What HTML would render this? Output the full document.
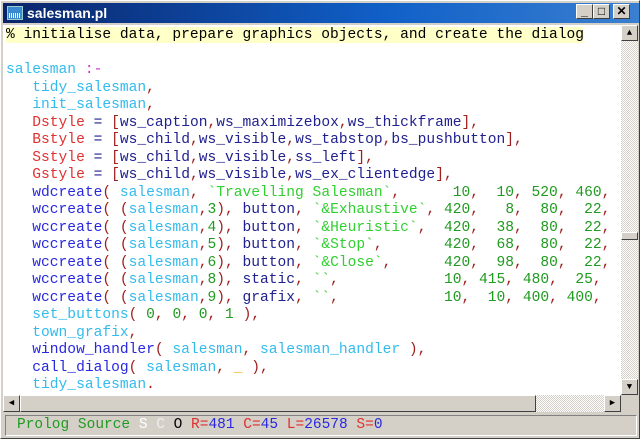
<!DOCTYPE html>
<html><head><style>
*{margin:0;padding:0;box-sizing:border-box}
body{width:640px;height:439px;background:#d4d0c8;position:relative;overflow:hidden;font-family:"Liberation Mono",monospace}
.win{position:absolute;left:0;top:0;width:640px;height:439px;border:1px solid #fff;border-right-color:#404040;border-bottom-color:#404040;background:#d4d0c8}
.title{position:absolute;left:2px;top:2px;width:636px;height:20px;background:linear-gradient(90deg,#0a246a,#1060c8 60%,#3a7fd0);color:#fff;font:bold 14px "Liberation Sans",sans-serif}
.title span{position:absolute;left:24px;top:2px}
.ic{position:absolute;left:4px;top:3px;width:16px;height:14px;background:#3a8ad0;border:1px solid #9cc}
.ic:after{content:"";position:absolute;left:1px;top:6px;width:12px;height:5px;background:repeating-linear-gradient(90deg,#fff 0 1px,#3a8ad0 1px 2px)}
.b{position:absolute;top:3px;width:17px;height:15px;background:#d4d0c8;border:1px solid #fff;border-right-color:#404040;border-bottom-color:#404040;color:#000;font:bold 12px "Liberation Sans",sans-serif;text-align:center;line-height:13px}
.ed{position:absolute;left:2px;top:24px;width:618px;height:370px;background:#fff;overflow:hidden}
pre{position:absolute;left:3px;top:2px;font:14.6px/17.5px "Liberation Mono",monospace;white-space:pre}
.cm{background:#ffffc8;color:#000}
.c{color:#33bbee}.p{color:#2828e0}.a{color:#202090}.r{color:#e03030}.d{color:#a02020}.n{color:#209a20}.s{color:#30d030}.m{color:#d030d0}.u{color:#f0b020}
.vs{position:absolute;left:620px;top:24px;width:17px;height:370px;background:repeating-conic-gradient(#fff 0 25%,#d4d0c8 0 50%) 0 0/2px 2px}
.hs{position:absolute;left:2px;top:394px;width:618px;height:17px;background:repeating-conic-gradient(#fff 0 25%,#d4d0c8 0 50%) 0 0/2px 2px}
.btn{position:absolute;background:#d4d0c8;border:1px solid #fff;border-right-color:#404040;border-bottom-color:#404040;font-size:9px;text-align:center;line-height:14px}
.st{position:absolute;left:4px;top:414px;width:632px;height:21px;border:1px solid #808080;border-right-color:#fff;border-bottom-color:#fff;font:14.5px/19px "Liberation Mono",monospace;padding-left:11px;white-space:pre}
</style></head><body>
<div class="win">
<div class="title"><div class="ic"></div><span>salesman.pl</span></div>
<div class="b" style="left:575px">_</div><div class="b" style="left:592px">□</div><div class="b" style="left:612px">✕</div>
<div class="ed"><pre><span class="cm">% initialise data, prepare graphics objects, and create the dialog</span>

<span class="c">salesman</span> <span class="m">:-</span>
   <span class="c">tidy_salesman</span><span class="d">,</span>
   <span class="c">init_salesman</span><span class="d">,</span>
   <span class="r">Dstyle</span> <span class="a">=</span> <span class="d">[</span><span class="a">ws_caption</span><span class="d">,</span><span class="a">ws_maximizebox</span><span class="d">,</span><span class="a">ws_thickframe</span><span class="d">],</span>
   <span class="r">Bstyle</span> <span class="a">=</span> <span class="d">[</span><span class="a">ws_child</span><span class="d">,</span><span class="a">ws_visible</span><span class="d">,</span><span class="a">ws_tabstop</span><span class="d">,</span><span class="a">bs_pushbutton</span><span class="d">],</span>
   <span class="r">Sstyle</span> <span class="a">=</span> <span class="d">[</span><span class="a">ws_child</span><span class="d">,</span><span class="a">ws_visible</span><span class="d">,</span><span class="a">ss_left</span><span class="d">],</span>
   <span class="r">Gstyle</span> <span class="a">=</span> <span class="d">[</span><span class="a">ws_child</span><span class="d">,</span><span class="a">ws_visible</span><span class="d">,</span><span class="a">ws_ex_clientedge</span><span class="d">],</span>
   <span class="p">wdcreate</span><span class="d">(</span> <span class="c">salesman</span><span class="d">,</span> <span class="s">`Travelling Salesman`</span><span class="d">,</span>      <span class="n">10</span><span class="d">,</span>  <span class="n">10</span><span class="d">,</span> <span class="n">520</span><span class="d">,</span> <span class="n">460</span><span class="d">,</span>
   <span class="p">wccreate</span><span class="d">(</span> <span class="d">(</span><span class="c">salesman</span><span class="d">,</span><span class="n">3</span><span class="d">),</span> <span class="a">button</span><span class="d">,</span> <span class="s">`&amp;Exhaustive`</span><span class="d">,</span> <span class="n">420</span><span class="d">,</span>   <span class="n">8</span><span class="d">,</span>  <span class="n">80</span><span class="d">,</span>  <span class="n">22</span><span class="d">,</span>
   <span class="p">wccreate</span><span class="d">(</span> <span class="d">(</span><span class="c">salesman</span><span class="d">,</span><span class="n">4</span><span class="d">),</span> <span class="a">button</span><span class="d">,</span> <span class="s">`&amp;Heuristic`</span><span class="d">,</span>  <span class="n">420</span><span class="d">,</span>  <span class="n">38</span><span class="d">,</span>  <span class="n">80</span><span class="d">,</span>  <span class="n">22</span><span class="d">,</span>
   <span class="p">wccreate</span><span class="d">(</span> <span class="d">(</span><span class="c">salesman</span><span class="d">,</span><span class="n">5</span><span class="d">),</span> <span class="a">button</span><span class="d">,</span> <span class="s">`&amp;Stop`</span><span class="d">,</span>       <span class="n">420</span><span class="d">,</span>  <span class="n">68</span><span class="d">,</span>  <span class="n">80</span><span class="d">,</span>  <span class="n">22</span><span class="d">,</span>
   <span class="p">wccreate</span><span class="d">(</span> <span class="d">(</span><span class="c">salesman</span><span class="d">,</span><span class="n">6</span><span class="d">),</span> <span class="a">button</span><span class="d">,</span> <span class="s">`&amp;Close`</span><span class="d">,</span>      <span class="n">420</span><span class="d">,</span>  <span class="n">98</span><span class="d">,</span>  <span class="n">80</span><span class="d">,</span>  <span class="n">22</span><span class="d">,</span>
   <span class="p">wccreate</span><span class="d">(</span> <span class="d">(</span><span class="c">salesman</span><span class="d">,</span><span class="n">8</span><span class="d">),</span> <span class="a">static</span><span class="d">,</span> <span class="s">``</span><span class="d">,</span>            <span class="n">10</span><span class="d">,</span> <span class="n">415</span><span class="d">,</span> <span class="n">480</span><span class="d">,</span>  <span class="n">25</span><span class="d">,</span>
   <span class="p">wccreate</span><span class="d">(</span> <span class="d">(</span><span class="c">salesman</span><span class="d">,</span><span class="n">9</span><span class="d">),</span> <span class="a">grafix</span><span class="d">,</span> <span class="s">``</span><span class="d">,</span>            <span class="n">10</span><span class="d">,</span>  <span class="n">10</span><span class="d">,</span> <span class="n">400</span><span class="d">,</span> <span class="n">400</span><span class="d">,</span>
   <span class="c">set_buttons</span><span class="d">(</span> <span class="n">0</span><span class="d">,</span> <span class="n">0</span><span class="d">,</span> <span class="n">0</span><span class="d">,</span> <span class="n">1</span> <span class="d">),</span>
   <span class="c">town_grafix</span><span class="d">,</span>
   <span class="p">window_handler</span><span class="d">(</span> <span class="c">salesman</span><span class="d">,</span> <span class="c">salesman_handler</span> <span class="d">),</span>
   <span class="p">call_dialog</span><span class="d">(</span> <span class="c">salesman</span><span class="d">,</span> <span class="u">_</span> <span class="d">),</span>
   <span class="c">tidy_salesman</span><span class="d">.</span></pre></div>
<div class="vs">
<div class="btn" style="left:0;top:0;width:17px;height:16px">▲</div>
<div class="btn" style="left:0;top:207px;width:17px;height:8px"></div>
<div class="btn" style="left:0;top:354px;width:17px;height:16px">▼</div>
</div>
<div class="hs">
<div class="btn" style="left:0;top:0;width:17px;height:17px">◀</div>
<div class="btn" style="left:17px;top:0;width:516px;height:17px"></div>
<div class="btn" style="left:601px;top:0;width:17px;height:17px">▶</div>
</div>
<div class="st"><span style="color:#209a20">Prolog Source</span> <span style="color:#fff">S</span> <span style="color:#eee">C</span> <span>O</span> <span class="r">R=</span><span class="p">481</span> <span class="r">C=</span><span class="p">45</span> <span class="r">L=</span><span class="p">26578</span> <span class="r">S=</span><span class="p">0</span></div>
</div>
</body></html>
